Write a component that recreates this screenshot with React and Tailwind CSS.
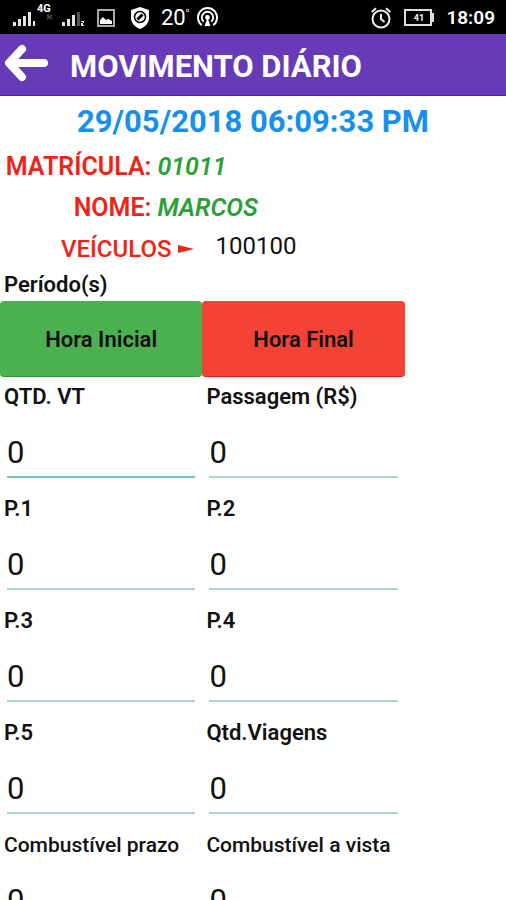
import { useState } from "react";

const defaultFields = [
  { name: "qtdVt", label: "QTD. VT", value: "0", line: "border-[#78c2b8]" },
  { name: "passagem", label: "Passagem (R$)", value: "0" },
  { name: "p1", label: "P.1", value: "0" },
  { name: "p2", label: "P.2", value: "0" },
  { name: "p3", label: "P.3", value: "0" },
  { name: "p4", label: "P.4", value: "0" },
  { name: "p5", label: "P.5", value: "0" },
  { name: "viagens", label: "Qtd.Viagens", value: "0" },
  { name: "prazo", label: "Combustível prazo", value: "0", long: true },
  { name: "vista", label: "Combustível a vista", value: "0", long: true },
];

function StatusBar() {
  return (
    <div className="h-[34px] shrink-0 bg-black text-white flex items-center justify-between pl-3 pr-[11px] pt-px">
      <div className="flex items-center">
        <svg className="w-[42px] h-[34px]" viewBox="0 0 42 34">
          <g fill="#e4e4e4">
            <rect x="1" y="21" width="3" height="4" />
            <rect x="6" y="18" width="3" height="7" />
            <rect x="11" y="15" width="3" height="10" />
            <rect x="16" y="11" width="3" height="14" />
            <rect x="21" y="20" width="2" height="5" />
          </g>
          <path d="m35 14 5 4M40 14l-5 4" stroke="#444" strokeWidth="2" />
          <text
            x="25"
            y="11"
            fill="#fff"
            fontSize="11"
            fontWeight="700"
            fontFamily="Roboto, sans-serif"
          >
            4G
          </text>
        </svg>
        <svg className="w-[24px] h-[34px] ml-[7px]" viewBox="0 0 24 34">
          <g fill="#e4e4e4">
            <rect x="1" y="21" width="3" height="4" />
            <rect x="6" y="18" width="3" height="7" />
            <rect x="11" y="14" width="3" height="11" />
            <rect x="20" y="20" width="3" height="1" />
            <rect x="22" y="21" width="1" height="1" />
            <rect x="20" y="22" width="2" height="2" />
            <rect x="20" y="24" width="3" height="1" />
          </g>
          <rect x="16" y="11" width="3" height="14" fill="#555" />
        </svg>
        <svg
          className="w-[18px] h-[18px] ml-[12px]"
          viewBox="0 0 18 18"
          fill="none"
        >
          <rect x="1" y="1" width="16" height="16" stroke="#aaa" strokeWidth="2" />
          <path d="M3 15v-4l3-3 3 3 2.500-1L15 12v3z" fill="#fff" />
        </svg>
        <svg
          className="w-[20px] h-[24px] ml-[15px]"
          viewBox="0 0 20 24"
          fill="none"
        >
          <path d="M10 1 19 4v8c0 5-4 9-9 11-5-2-9-6-9-11V4z" fill="#fff" />
          <circle cx="10" cy="11" r="5.500" stroke="#000" strokeWidth="1.500" />
          <path d="m7.500 13.500 5-5" stroke="#000" strokeWidth="3" />
        </svg>
        <span className="ml-[11px] text-[22px] leading-none">20</span>
        <svg className="w-[4px] h-[20px]" viewBox="0 0 4 20">
          <circle cx="1.500" cy="2.500" r="1.200" fill="none" stroke="#fff" />
        </svg>
        <svg
          className="w-[21px] h-[21px] ml-[7px]"
          viewBox="0 0 22 22"
          fill="none"
          stroke="#fff"
          strokeWidth="2"
        >
          <path d="M5 19a10 10 0 1 1 12 0" />
          <path d="M7 15.500a6 6 0 1 1 8 0" />
          <circle cx="11" cy="11" r="2.500" fill="#fff" stroke="none" />
          <path d="M11 11 8 20h6z" fill="#fff" stroke="none" />
        </svg>
      </div>
      <div className="flex items-center">
        <svg
          className="w-[20px] h-[22px]"
          viewBox="0 0 20 22"
          fill="none"
          stroke="#eee"
          strokeWidth="2"
        >
          <circle cx="10" cy="12" r="8.500" />
          <path d="M10 7v5l3.500 3M.8 5 5 1.200M19.200 5 15 1.200" />
        </svg>
        <svg className="w-[30px] h-[17px] ml-[13px]" viewBox="0 0 30 17">
          <rect
            x="1"
            y="1"
            width="26"
            height="15"
            fill="none"
            stroke="#ddd"
            strokeWidth="2"
          />
          <rect x="28" y="4" width="2" height="9" fill="#ddd" />
          <text
            x="15"
            y="12"
            fill="#fff"
            fontSize="9"
            fontWeight="700"
            textAnchor="middle"
            fontFamily="Roboto, sans-serif"
          >
            41
          </text>
        </svg>
        <span className="ml-3 text-[19px] leading-none font-semibold">
          18:09
        </span>
      </div>
    </div>
  );
}

function Field({ field, onChange }) {
  return (
    <div className="px-1 mb-3">
      <label
        htmlFor={field.name}
        className={
          field.long
            ? "block h-[38px] leading-[38px] text-[21px] font-medium whitespace-nowrap"
            : "block h-[38px] leading-[38px] text-[22px] font-semibold whitespace-nowrap"
        }
      >
        {field.label}
      </label>
      <div className="px-[3px]">
        <input
          id={field.name}
          type="text"
          inputMode="numeric"
          value={field.value}
          onChange={(e) => onChange(field.name, e.target.value)}
          className={`block w-full h-[62px] pt-3 text-[31px] border-b-2 outline-none ${
            field.line || "border-[#a9d8cc]"
          }`}
        />
      </div>
    </div>
  );
}

export default function App() {
  const [fields, setFields] = useState(defaultFields);
  const [vehicle, setVehicle] = useState("100100");

  const changeField = (name, value) => {
    setFields(fields.map((f) => (f.name === name ? { ...f, value } : f)));
  };

  return (
    <div className="h-screen flex flex-col bg-white text-[#111] font-[Roboto,sans-serif]">
      <StatusBar />
      <header className="h-[62px] shrink-0 bg-[#673ab7] border-b border-[#5a1fae] text-white flex items-center">
        <button type="button" aria-label="Voltar" className="pl-1 pb-1">
          <svg
            className="w-[44px] h-[38px]"
            viewBox="0 0 44 38"
            fill="none"
            stroke="#fff"
            strokeWidth="8"
            strokeLinecap="round"
            strokeLinejoin="round"
          >
            <path d="M18 5 5 19l13 14M6 19h34" />
          </svg>
        </button>
        <h1 className="ml-[22px] pt-1 text-[31px] leading-none font-bold">
          MOVIMENTO DIÁRIO
        </h1>
      </header>

      <main className="flex-grow overflow-y-auto [scrollbar-width:none]">
        <p className="h-[50px] leading-[52px] text-center text-[31px] font-bold text-[#1690ee]">
          29/05/2018 06:09:33 PM
        </p>
        <div className="grid grid-cols-[3fr_7fr] gap-x-[6px] pl-[2px] text-[25px] leading-[41px] font-semibold">
          <span className="text-right text-[#ee2418]">MATRÍCULA:</span>
          <em className="text-[#2ba036]">01011</em>
          <span className="text-right text-[#ee2418]">NOME:</span>
          <em className="text-[#2ba036]">MARCOS</em>
        </div>
        <div className="h-[42px] flex items-center">
          <label
            htmlFor="vehicle"
            className="pl-[61px] flex items-center gap-[6px] text-[24px] font-medium text-[#ee2418]"
          >
            VEÍCULOS
            <svg className="w-[16px] h-[8px]" viewBox="0 0 16 8">
              <path d="M0 0 16 4 0 8z" fill="#ee2418" />
            </svg>
          </label>
          <select
            id="vehicle"
            value={vehicle}
            onChange={(e) => setVehicle(e.target.value)}
            className="ml-[22px] pb-[6px] appearance-none text-[24px] outline-none"
          >
            <option value="100100">100100</option>
          </select>
        </div>
        <h2 className="px-1 h-[31px] leading-[30px] text-[22px] font-semibold">
          Período(s)
        </h2>
        <div className="w-4/5 grid grid-cols-2 text-[22px] font-semibold">
          <button
            type="button"
            className="h-[76px] pt-[2px] rounded bg-[#4caf50] border-b border-[#1f9f2c]"
          >
            Hora Inicial
          </button>
          <button
            type="button"
            className="h-[76px] pt-[2px] rounded bg-[#f44336] border-b border-[#e02015]"
          >
            Hora Final
          </button>
        </div>
        <div className="w-4/5 pt-px grid grid-cols-2">
          {fields.map((field) => (
            <Field key={field.name} field={field} onChange={changeField} />
          ))}
        </div>
      </main>
    </div>
  );
}
